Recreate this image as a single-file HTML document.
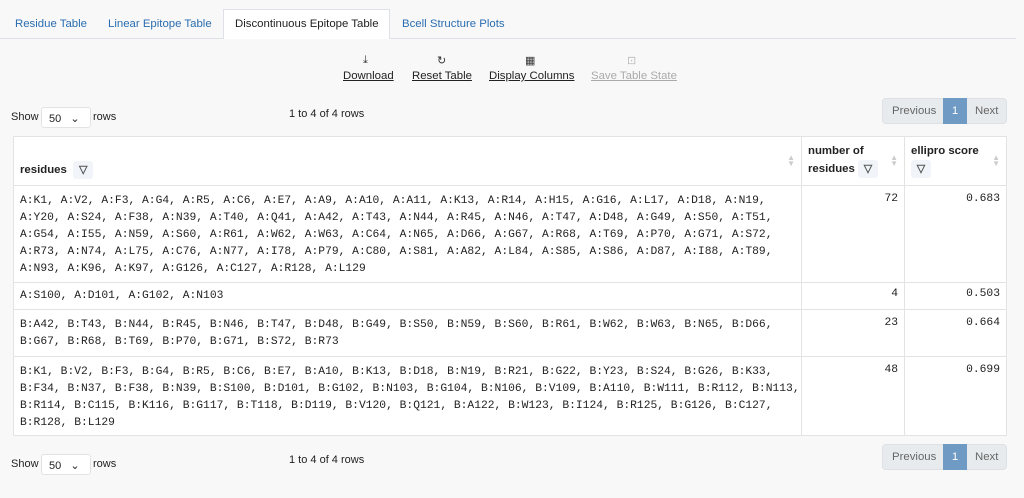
<!DOCTYPE html>
<html><head><meta charset="utf-8"><style>
*{box-sizing:border-box;margin:0;padding:0}
body{width:1024px;height:498px;background:#f8f8f8;font-family:"Liberation Sans",sans-serif;font-size:12px;color:#222;position:relative;overflow:hidden}
.a{position:absolute}
.tab{position:absolute;color:#2a6db0;font-size:11.4px}
.tb{position:absolute;top:70px;font-size:11.4px;text-decoration:underline;color:#222}
.ic{position:absolute;top:54px;font-size:11px;color:#333}
.sel{position:absolute;width:50px;height:21px;background:#fff;border:1px solid #e3e3e3;border-radius:3px;font-size:11px;padding:4px 0 0 7px}
.pg{position:absolute;height:26px;border-radius:4px;background:#e8ebee;border:1px solid #dde1e5;width:125px}
.pg span{position:absolute;top:6px;font-size:11.4px;color:#666}
.pg .one{top:-1px;left:60px;width:24px;height:26px;background:#6f9ac4;color:#fff;text-align:center;padding-top:7px}
table{position:absolute;left:13px;top:136px;width:994px;border-collapse:collapse;background:#fff;table-layout:fixed}
td,th{border:1px solid #e3e3e3;vertical-align:top;overflow:hidden}
th{text-align:left;font-size:11.4px;font-weight:bold;padding:0 6px;position:relative}
td.r{font-family:"Liberation Mono",monospace;font-size:11.3px;line-height:17px;padding:7px 6px 0 6px;white-space:nowrap}
td.n{text-align:right;font-family:"Liberation Mono",monospace;font-size:11.3px;padding:7px 6px 0}
.f{display:inline-block;width:20px;height:18px;background:#f1f5f9;border-radius:3px;vertical-align:middle;text-align:center;font-size:11px;color:#555;line-height:18px}
.s{position:absolute;right:6px;top:18px;color:#ccc;font-size:8px;line-height:6px}
</style></head><body>
<div class="a" style="left:0;top:38px;width:1016px;border-top:1px solid #dee2e6"></div>
<div class="a" style="left:223px;top:9px;width:167px;height:30px;background:#fff;border:1px solid #dee2e6;border-bottom:none"></div>
<div class="tab" style="left:15px;top:18px">Residue Table</div>
<div class="tab" style="left:108px;top:18px">Linear Epitope Table</div>
<div class="tab" style="left:235px;top:18px;color:#222">Discontinuous Epitope Table</div>
<div class="tab" style="left:402px;top:18px">Bcell Structure Plots</div>

<div class="ic" style="left:363px">⤓</div>
<div class="ic" style="left:437px">↻</div>
<div class="ic" style="left:525px">▦</div>
<div class="ic" style="left:627px;color:#bbb">⊡</div>
<div class="tb" style="left:343px">Download</div>
<div class="tb" style="left:412px">Reset Table</div>
<div class="tb" style="left:489px">Display Columns</div>
<div class="tb" style="left:591px;color:#aaa">Save Table State</div>

<div class="a" style="left:11px;top:111px;font-size:11px">Show</div>
<div class="sel" style="left:41px;top:107px">50 &nbsp;&nbsp;⌄</div>
<div class="a" style="left:93px;top:111px;font-size:11px">rows</div>
<div class="a" style="left:289px;top:108px;font-size:11px">1 to 4 of 4 rows</div>
<div class="pg" style="left:882px;top:98px"><span style="left:9px">Previous</span><span class="one">1</span><span style="left:92px">Next</span></div>

<table>
<colgroup><col style="width:788px"><col style="width:103px"><col></colgroup>
<tr style="height:49px"><th style="vertical-align:bottom;padding-bottom:6px">residues &nbsp;<span class="f">▽</span><span class="s">▲<br>▼</span></th>
<th style="line-height:18px;padding-top:5px">number of<br>residues <span class="f">▽</span><span class="s">▲<br>▼</span></th>
<th style="line-height:18px;padding-top:5px">ellipro score<br><span class="f">▽</span><span class="s">▲<br>▼</span></th></tr>
<tr style="height:97px"><td class="r">A:K1, A:V2, A:F3, A:G4, A:R5, A:C6, A:E7, A:A9, A:A10, A:A11, A:K13, A:R14, A:H15, A:G16, A:L17, A:D18, A:N19,<br>A:Y20, A:S24, A:F38, A:N39, A:T40, A:Q41, A:A42, A:T43, A:N44, A:R45, A:N46, A:T47, A:D48, A:G49, A:S50, A:T51,<br>A:G54, A:I55, A:N59, A:S60, A:R61, A:W62, A:W63, A:C64, A:N65, A:D66, A:G67, A:R68, A:T69, A:P70, A:G71, A:S72,<br>A:R73, A:N74, A:L75, A:C76, A:N77, A:I78, A:P79, A:C80, A:S81, A:A82, A:L84, A:S85, A:S86, A:D87, A:I88, A:T89,<br>A:N93, A:K96, A:K97, A:G126, A:C127, A:R128, A:L129</td><td class="n">72</td><td class="n">0.683</td></tr>
<tr style="height:27px"><td class="r" style="padding-top:5px">A:S100, A:D101, A:G102, A:N103</td><td class="n" style="padding-top:5px">4</td><td class="n" style="padding-top:5px">0.503</td></tr>
<tr style="height:47px"><td class="r">B:A42, B:T43, B:N44, B:R45, B:N46, B:T47, B:D48, B:G49, B:S50, B:N59, B:S60, B:R61, B:W62, B:W63, B:N65, B:D66,<br>B:G67, B:R68, B:T69, B:P70, B:G71, B:S72, B:R73</td><td class="n">23</td><td class="n">0.664</td></tr>
<tr style="height:79px"><td class="r">B:K1, B:V2, B:F3, B:G4, B:R5, B:C6, B:E7, B:A10, B:K13, B:D18, B:N19, B:R21, B:G22, B:Y23, B:S24, B:G26, B:K33,<br>B:F34, B:N37, B:F38, B:N39, B:S100, B:D101, B:G102, B:N103, B:G104, B:N106, B:V109, B:A110, B:W111, B:R112, B:N113,<br>B:R114, B:C115, B:K116, B:G117, B:T118, B:D119, B:V120, B:Q121, B:A122, B:W123, B:I124, B:R125, B:G126, B:C127,<br>B:R128, B:L129</td><td class="n">48</td><td class="n">0.699</td></tr>
</table>

<div class="a" style="left:11px;top:458px;font-size:11px">Show</div>
<div class="sel" style="left:41px;top:454px">50 &nbsp;&nbsp;⌄</div>
<div class="a" style="left:93px;top:458px;font-size:11px">rows</div>
<div class="a" style="left:289px;top:454px;font-size:11px">1 to 4 of 4 rows</div>
<div class="pg" style="left:882px;top:444px"><span style="left:9px">Previous</span><span class="one">1</span><span style="left:92px">Next</span></div>
</body></html>
